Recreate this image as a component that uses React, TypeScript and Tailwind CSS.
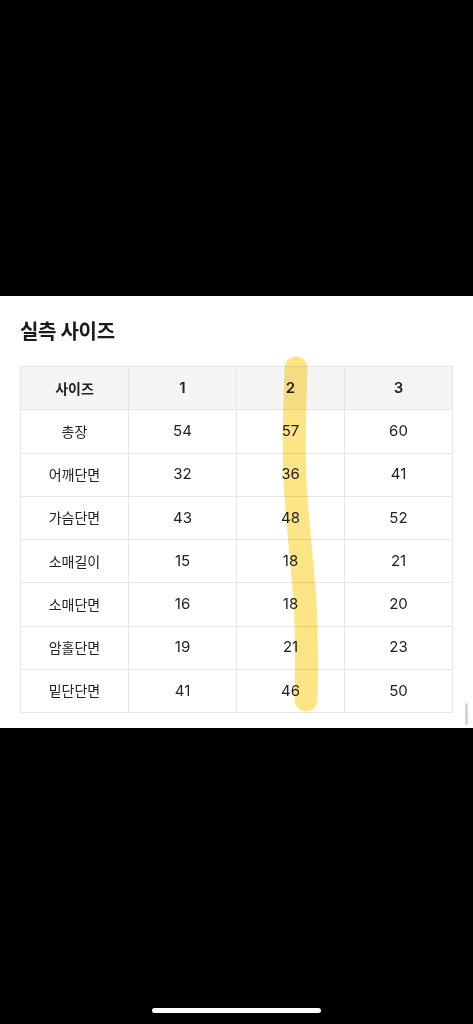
import React from "react";

const rows: [string, string, string, string][] = [
  ["총장", "54", "57", "60"],
  ["어깨단면", "32", "36", "41"],
  ["가슴단면", "43", "48", "52"],
  ["소매길이", "15", "18", "21"],
  ["소매단면", "16", "18", "20"],
  ["암홀단면", "19", "21", "23"],
  ["밑단단면", "41", "46", "50"],
];

export default function App() {
  return (
    <div
      className="relative w-full h-[1024px] bg-black flex flex-col overflow-hidden"
      style={{ fontFamily: 'Inter, "Noto Sans CJK KR", "Noto Sans", sans-serif' }}
    >
      <div className="h-[296px] shrink-0" />
      <div className="relative h-[432px] shrink-0 bg-white px-[20px] pt-[21px]">
        <h2
          className="text-[20px] leading-[28px] font-semibold text-[#1a1a1a] tracking-[-0.3px]"
          style={{ fontFamily: '"Noto Sans CJK KR", sans-serif' }}
        >
          실측 사이즈
        </h2>
        <table className="mt-[21px] w-[433px] border-collapse table-fixed text-[15px] text-[#222]">
          <thead>
            <tr className="bg-[#f5f5f5]">
              {["사이즈", "1", "2", "3"].map((h, i) => (
                <th
                  key={i}
                  className={`h-[43.25px] border border-[#e6e6e6] font-semibold text-center p-0 ${
                    i === 0 ? "text-[14px]" : "text-[15px]"
                  }`}
                >
                  {h}
                </th>
              ))}
            </tr>
          </thead>
          <tbody>
            {rows.map((r) => (
              <tr key={r[0]}>
                {r.map((c, i) => (
                  <td
                    key={i}
                    className={`h-[43.25px] border border-[#e6e6e6] text-center font-normal p-0 ${
                      i === 0 ? "text-[14px]" : "text-[15px]"
                    }`}
                  >
                    {c}
                  </td>
                ))}
              </tr>
            ))}
          </tbody>
        </table>
        <div className="absolute right-[5px] bottom-[3px] w-[3px] h-[22px] rounded-full bg-[#d4d4d4]" />
      </div>
      <svg
        className="absolute left-0 top-0 pointer-events-none mix-blend-multiply"
        width="473"
        height="1024"
      >
        <path
          d="M296 368 C295 400 293 440 295 480 C297 520 302 560 305 600 C307 640 307 670 306 700"
          stroke="#fde480"
          strokeWidth="23"
          strokeLinecap="round"
          fill="none"
          opacity="0.95"
        />
      </svg>
      <div className="absolute left-[152px] top-[1008px] w-[169px] h-[5px] rounded-full bg-white" />
    </div>
  );
}
